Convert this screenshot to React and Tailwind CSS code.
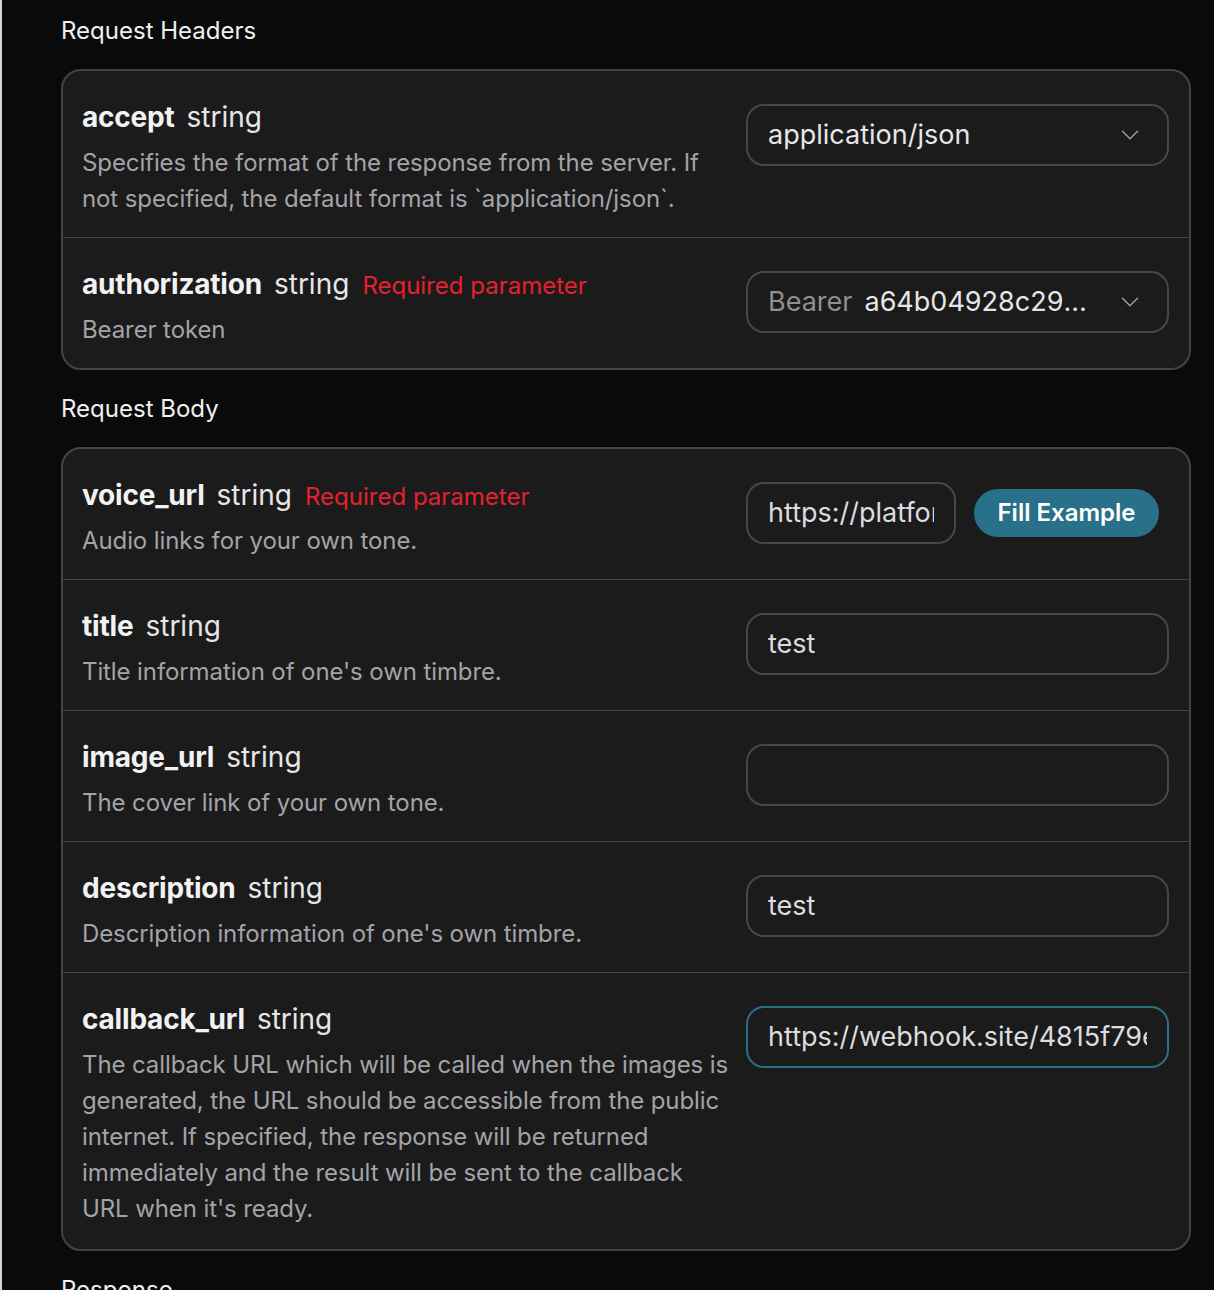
import { ChevronDown } from "lucide-react";

const font = { fontFamily: "Inter, 'Noto Sans', sans-serif" };

function Title({ name, required }) {
  return (
    <div className="flex items-baseline h-[32px] leading-[32px] whitespace-nowrap">
      <span className="text-[28px] font-bold text-[#f2f2f2] tracking-[-0.2px]">{name}</span>
      <span className="ml-[12px] text-[28px] text-[#e6e6e8]">string</span>
      {required && (
        <span className="ml-[13px] text-[24px] text-[#e5212f]">Required parameter</span>
      )}
    </div>
  );
}

function Row({ name, required, desc, children, last, tall }) {
  return (
    <div
      className={
        "grid grid-cols-[1fr_423px] gap-[16px] pl-[19px] pr-[20px] pt-[30px] " +
        (tall ? "pb-[22px] " : "pb-[20px] ") +
        (last ? "" : "border-b border-[#434343]")
      }
    >
      <div>
        <Title name={name} required={required} />
        <p className="mt-[12px] text-[24px] leading-[36px] tracking-[-0.1px] text-[#a3a3a8]">{desc}</p>
      </div>
      <div className="pt-[3px]">{children}</div>
    </div>
  );
}

function Box({ children, focus }) {
  return (
    <div
      className={
        "h-[62px] rounded-[18px] border-2 bg-[#1b1b1b] flex items-center px-[20px] overflow-hidden " +
        (focus ? "border-[#2b6e86]" : "border-[#474747]")
      }
    >
      {children}
    </div>
  );
}

function Select({ children }) {
  return (
    <Box>
      <div className="flex-1 min-w-0 flex items-center text-[27px] whitespace-nowrap overflow-hidden">
        {children}
      </div>
      <ChevronDown size={30} strokeWidth={1.2} className="text-[#9b9b9b] ml-[28px] mr-[2px] shrink-0" />
    </Box>
  );
}

function Text({ value, focus }) {
  return (
    <Box focus={focus}>
      <span className="text-[27px] text-[#dcdce0] whitespace-nowrap overflow-hidden">{value}</span>
    </Box>
  );
}

function Section({ label, children }) {
  return (
    <div>
      <h2 className="text-[24px] leading-[36px] text-[#f0f0f0] pt-[13px]">{label}</h2>
      <div className="mt-[20px] mb-[8px] rounded-[20px] border-2 border-[#444] bg-[#1b1b1b]">{children}</div>
    </div>
  );
}

export default function App() {
  return (
    <div className="min-h-screen bg-[#0a0a0a] flex" style={font}>
      <div className="w-[2px] bg-[#d6d6d6] shrink-0" />
      <div className="w-[1130px] ml-[59px] h-[1290px] overflow-hidden">
        <Section label="Request Headers">
          <Row
            name="accept"
            desc="Specifies the format of the response from the server. If not specified, the default format is `application/json`."
          >
            <Select>
              <span className="text-[#e6e6e8]">application/json</span>
            </Select>
          </Row>
          <Row name="authorization" required desc="Bearer token" last>
            <Select>
              <span className="text-[#8f8f94]">Bearer</span>
              <span className="ml-[12px] text-[#e6e6e8] truncate">a64b04928c29a9f1e6b2</span>
            </Select>
          </Row>
        </Section>
        <Section label="Request Body">
          <Row name="voice_url" required desc="Audio links for your own tone.">
            <div className="flex items-center">
              <div className="w-[210px] shrink-0">
                <Text value="https://platform.acedata.cloud/audio.mp3" />
              </div>
              <button className="ml-[18px] h-[48px] w-[185px] shrink-0 rounded-full bg-[#287189] text-white text-[24px] font-semibold">
                Fill Example
              </button>
            </div>
          </Row>
          <Row name="title" desc="Title information of one's own timbre.">
            <Text value="test" />
          </Row>
          <Row name="image_url" desc="The cover link of your own tone.">
            <Text value="" />
          </Row>
          <Row name="description" desc="Description information of one's own timbre.">
            <Text value="test" />
          </Row>
          <Row
            name="callback_url"
            last
            tall
            desc="The callback URL which will be called when the images is generated, the URL should be accessible from the public internet. If specified, the response will be returned immediately and the result will be sent to the callback URL when it's ready."
          >
            <Text focus value="https://webhook.site/4815f79e-5e0b-4c3a-9c3c" />
          </Row>
        </Section>
        <h2 className="text-[24px] leading-[36px] text-[#f0f0f0] pt-[13px]">Response</h2>
      </div>
    </div>
  );
}
